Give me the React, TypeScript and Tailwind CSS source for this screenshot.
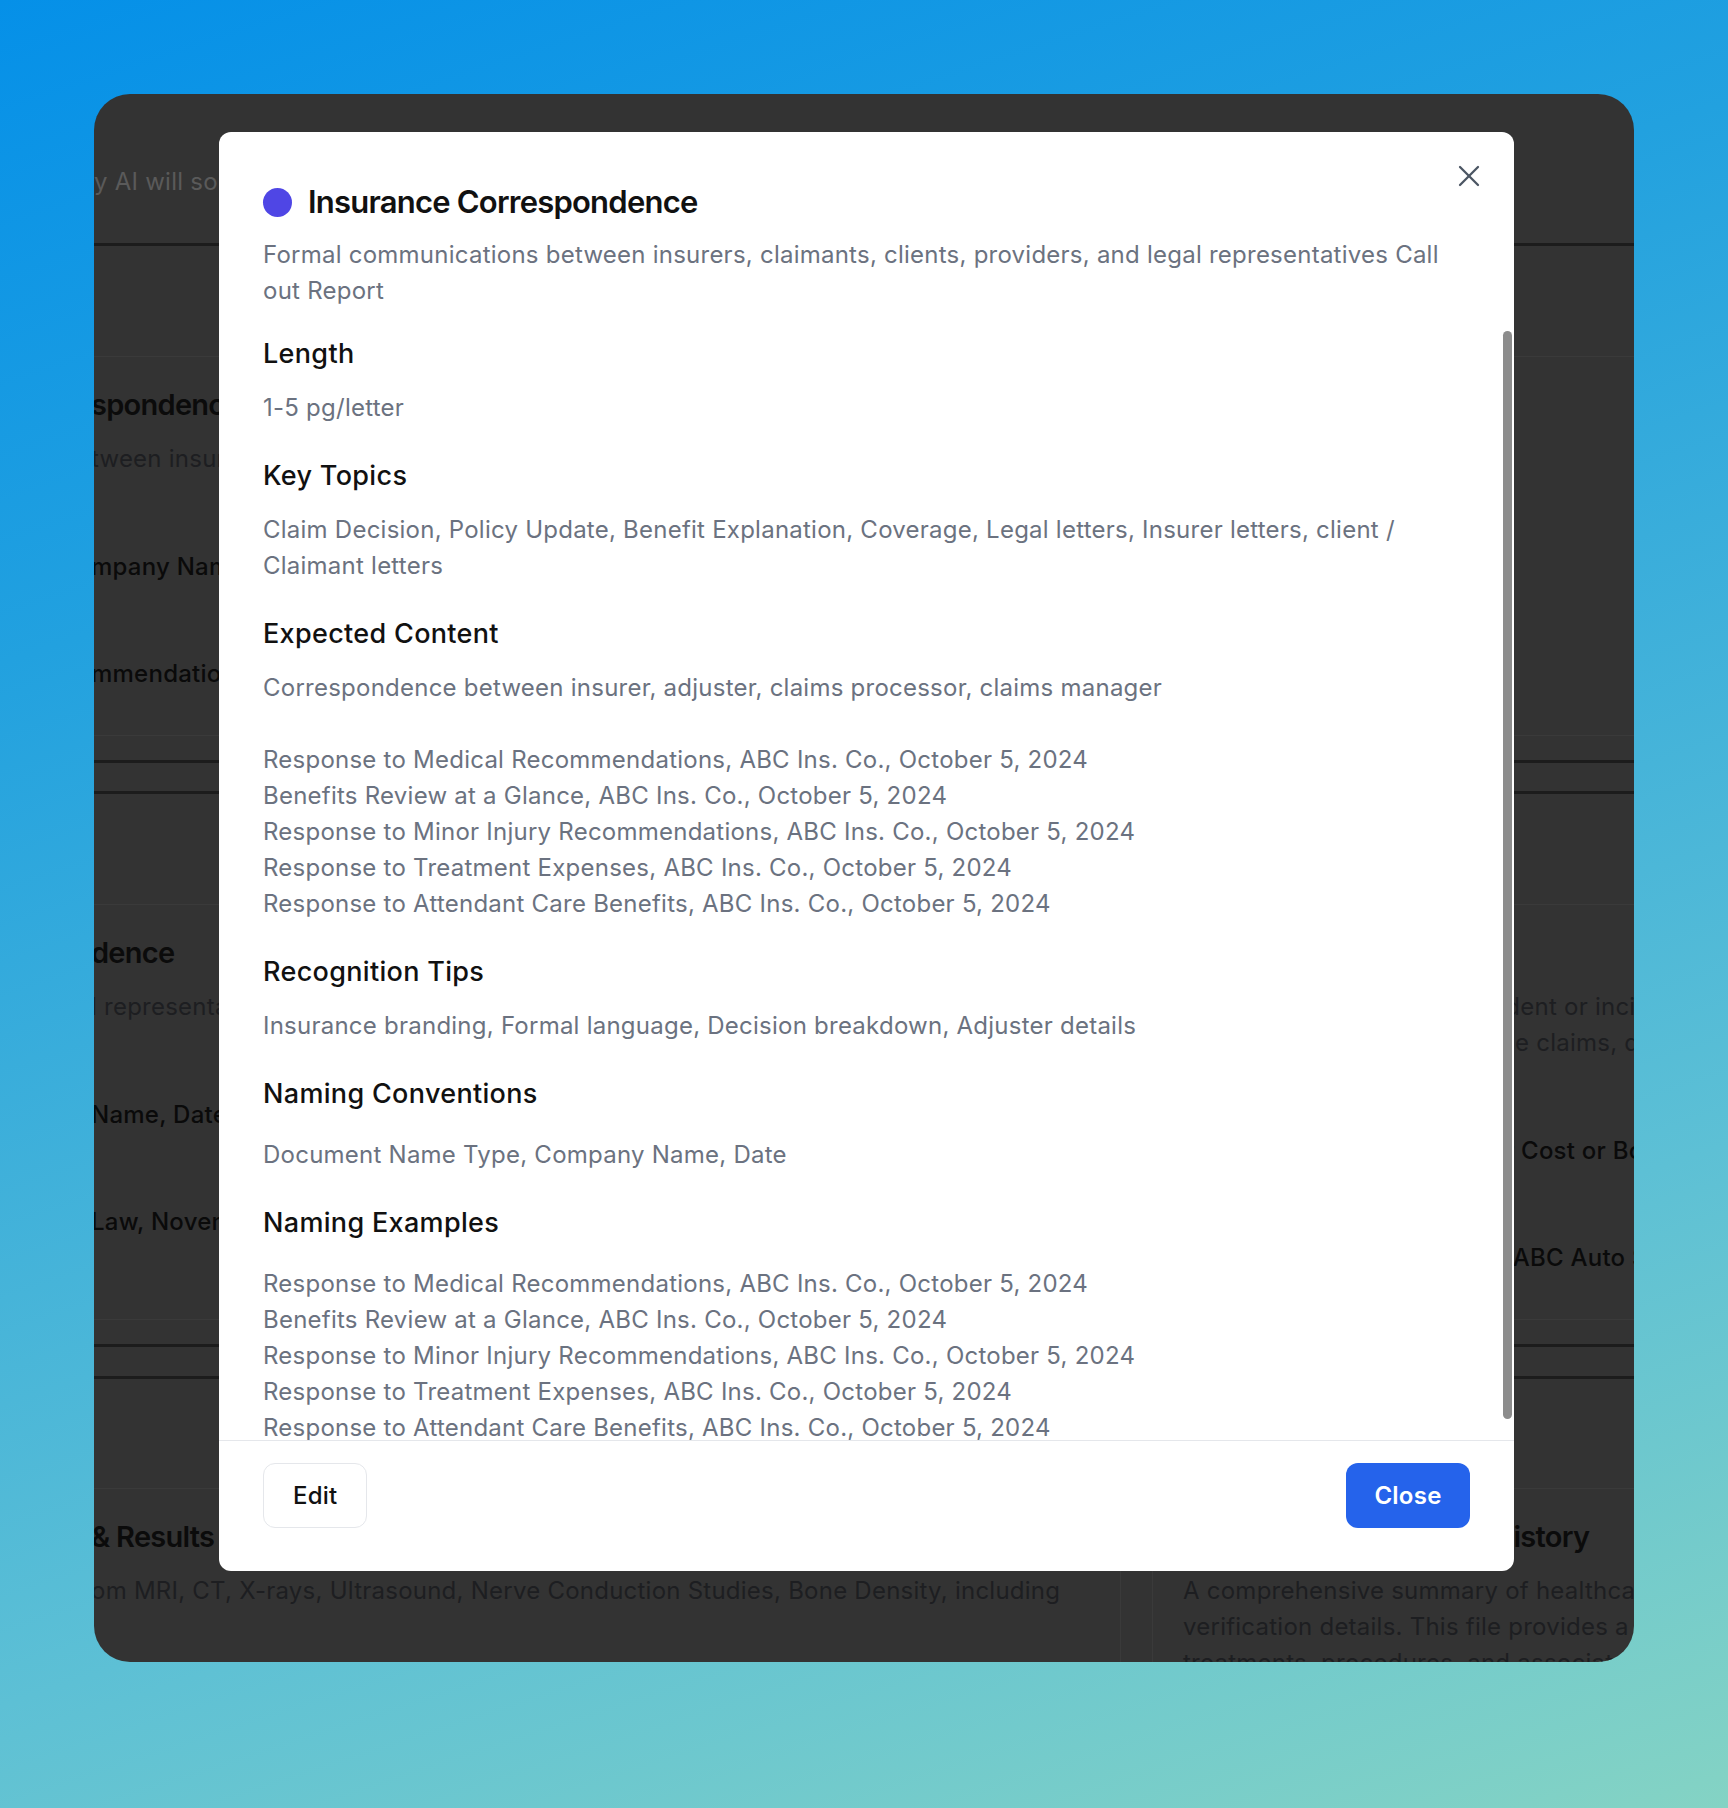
import { X } from "lucide-react";

const expected = [
  "Correspondence between insurer, adjuster, claims processor, claims manager",
  "",
  "Response to Medical Recommendations, ABC Ins. Co., October 5, 2024",
  "Benefits Review at a Glance, ABC Ins. Co., October 5, 2024",
  "Response to Minor Injury Recommendations, ABC Ins. Co., October 5, 2024",
  "Response to Treatment Expenses, ABC Ins. Co., October 5, 2024",
  "Response to Attendant Care Benefits, ABC Ins. Co., October 5, 2024",
];

const examples = expected.slice(2);

function Section({
  title,
  lines,
  wide,
}: {
  title: string;
  lines: string[];
  wide?: boolean;
}) {
  return (
    <div>
      <h3 className="text-[27px] leading-[40px] font-medium tracking-[0.012em] text-[#111111]">
        {title}
      </h3>
      <div
        className={`${wide ? "mt-[23px]" : "mt-[16px]"} text-[24px] leading-[36px] text-[#6b7280]`}
      >
        {lines.map((line, i) => (
          <p key={i} className="min-h-[36px]">
            {line}
          </p>
        ))}
      </div>
    </div>
  );
}

function BackCard({
  heading,
  desc,
  fields = [],
}: {
  heading: string;
  desc: string[];
  fields?: string[];
}) {
  return (
    <div className="w-[1061px] shrink-0 border border-[#3a3a3a] px-[30px] pt-[28px] pb-[43px] whitespace-nowrap">
      <div className="text-[29px] leading-[40px] font-semibold tracking-[-0.025em] text-[#0b0b0b]">
        {heading}
      </div>
      <div className="mt-[16px] text-[24px] leading-[36px] text-[#1d1e21]">
        {desc.map((d, i) => (
          <div key={i}>{d}</div>
        ))}
      </div>
      {fields.map((f, i) => (
        <div
          key={i}
          className={`${i === 0 ? "mt-[72px]" : "mt-[71px]"} text-[24px] leading-[36px] font-medium text-[#0a0a0a]`}
        >
          {f}
        </div>
      ))}
    </div>
  );
}

function Backdrop() {
  return (
    <div className="w-full">
      <div className="h-[152px] pt-[70px] border-b-[3px] border-[#1c1c1c] whitespace-nowrap text-[24px] leading-[36px] text-[#5a5a5a]">
        y AI will sort your documents into the categories below
      </div>

      <div className="pt-[110px] pb-[24px] border-b-[3px] border-[#1c1c1c]">
        <div className="flex gap-[31px] ml-[-34px]">
          <BackCard
            heading="spondence"
            desc={["tween insurers, claimants, clients, providers, and legal representatives"]}
            fields={["mpany Name, Date", "mmendations, ABC Ins. Co., October 5, 2024"]}
          />
          <BackCard heading="" desc={[""]} fields={["", ""]} />
        </div>
      </div>

      <div className="mt-[28px] border-t-[3px] border-[#1c1c1c] pt-[110px] pb-[24px] border-b-[3px]">
        <div className="flex gap-[31px] ml-[-34px]">
          <BackCard
            heading="dence"
            desc={["l representatives"]}
            fields={["Name, Date", "Law, November 12, 2024"]}
          />
          <BackCard
            heading="Accident Reports"
            desc={[
              "Records describing the accident or incident, including police reports",
              "that are then used to back the claims, disputes and settlements",
            ]}
            fields={[
              "Document Name, Car Repair Cost or Body Shop, Date",
              "Vehicle Collision Repair Bill, ABC Auto Service, November 2, 2024",
            ]}
          />
        </div>
      </div>

      <div className="mt-[29px] border-t-[3px] border-[#1c1c1c] pt-[109px]">
        <div className="flex gap-[31px] ml-[-34px]">
          <BackCard
            heading="& Results"
            desc={["om MRI, CT, X-rays, Ultrasound, Nerve Conduction Studies, Bone Density, including"]}
          />
          <BackCard
            heading="OHIP Healthcare Claim History"
            desc={[
              "A comprehensive summary of healthcare services billed, including",
              "verification details. This file provides a complete record of all",
              "treatments, procedures, and associated costs.",
            ]}
          />
        </div>
      </div>
    </div>
  );
}

function DetailsModal() {
  return (
    <div className="relative ml-[125px] mt-[38px] w-[1295px] h-[1439px] bg-white rounded-[12px] flex flex-col overflow-hidden">
      <button className="absolute top-[26px] right-[27px] text-[#4b5563]">
        <X size={36} strokeWidth={1.5} />
      </button>

      <div className="px-[44px] pt-[50px] pb-[18px]">
        <div className="flex items-center gap-[16px] h-[40px]">
          <span className="w-[29px] h-[29px] rounded-full bg-[#4f46e5]" />
          <h2 className="text-[31px] leading-[40px] font-semibold text-[#111111] tracking-[-0.025em]">
            Insurance Correspondence
          </h2>
        </div>
        <p className="mt-[15px] text-[24px] leading-[36px] text-[#6b7280]">
          Formal communications between insurers, claimants, clients, providers,
          and legal representatives Call out Report
        </p>
      </div>

      <div className="relative flex-1 min-h-0">
        <div className="h-full overflow-hidden px-[44px] pt-[7px]">
          <div className="flex flex-col gap-[30px] pb-[18px]">
            <Section title="Length" lines={["1-5 pg/letter"]} />
            <Section
              title="Key Topics"
              lines={[
                "Claim Decision, Policy Update, Benefit Explanation, Coverage, Legal letters, Insurer letters, client / Claimant letters",
              ]}
            />
            <Section title="Expected Content" lines={expected} />
            <Section
              title="Recognition Tips"
              lines={[
                "Insurance branding, Formal language, Decision breakdown, Adjuster details",
              ]}
            />
            <Section
              title="Naming Conventions"
              lines={["Document Name Type, Company Name, Date"]}
              wide
            />
            <Section title="Naming Examples" lines={examples} wide />
          </div>
        </div>
        <div className="absolute right-[2px] top-[4px] w-[9px] h-[1088px] rounded-full bg-[#8c8c8c]" />
      </div>

      <div className="border-t border-[#e5e7eb] px-[44px] pt-[22px] pb-[43px] flex items-center justify-between">
        <button className="h-[65px] px-[29px] rounded-[12px] border border-[#e5e7eb] bg-white text-[24px] font-medium text-[#111111]">
          Edit
        </button>
        <button className="h-[65px] w-[124px] rounded-[12px] bg-[#2563eb] text-[24px] font-semibold text-white">
          Close
        </button>
      </div>
    </div>
  );
}

export default function App() {
  return (
    <div className="min-h-[1808px] w-full pt-[94px] pl-[94px] bg-[linear-gradient(162deg,#0590e8_0%,#22a1df_28%,#5dc0d5_72%,#84d3c4_100%)] font-[Inter,'Noto_Sans',sans-serif] tracking-[0.015em]">
      <div className="relative w-[1540px] h-[1568px] rounded-[36px] overflow-hidden bg-[#333333]">
        <Backdrop />
        <div className="absolute inset-0">
          <DetailsModal />
        </div>
      </div>
    </div>
  );
}
